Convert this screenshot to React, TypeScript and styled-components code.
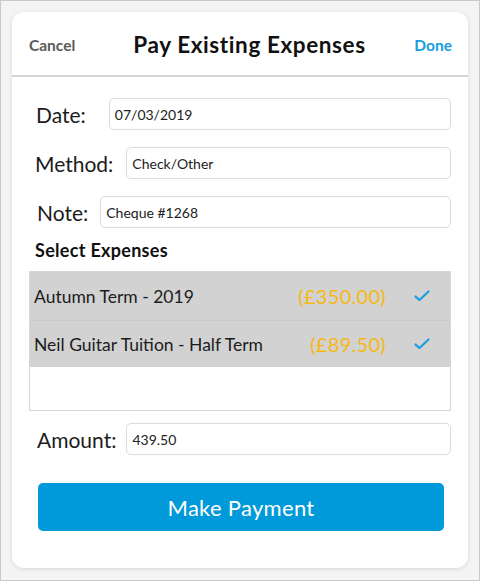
import React from "react";
import styled, { createGlobalStyle } from "styled-components";

const GlobalStyle = createGlobalStyle`
  html, body {
    margin: 0;
    padding: 0;
    background: #f4f4f4;
  }
  * { box-sizing: border-box; }
`;

const Frame = styled.div`
  width: 480px;
  height: 581px;
  border: 1px solid #c9c9c9;
  background: #f4f4f4;
  padding: 11px;
  font-family: Lato, "Noto Sans", sans-serif;
`;

const Card = styled.div`
  width: 456px;
  height: 556px;
  background: #fff;
  border-radius: 12px;
  box-shadow: 0 1px 4px rgba(0, 0, 0, 0.12);
  display: flex;
  flex-direction: column;
`;

const Header = styled.div`
  height: 65px;
  border-bottom: 2px solid #d4d4d4;
  display: flex;
  align-items: center;
  justify-content: space-between;
  padding: 2px 16px 0 17px;
`;

const HeaderButton = styled.span<{ $primary?: boolean }>`
  font-size: 15.5px;
  font-weight: 700;
  color: ${(p) => (p.$primary ? "#1a9ee0" : "#5a5a5a")};
  width: 60px;
  text-align: ${(p) => (p.$primary ? "right" : "left")};
`;

const Title = styled.h1`
  margin: 0 0 0 18px;
  font-size: 22.5px;
  font-weight: 700;
  letter-spacing: 0.6px;
  color: #111;
`;

const Body = styled.div`
  padding: 21px 17px 0 17px;
  display: flex;
  flex-direction: column;
`;

const FieldRow = styled.div<{ $gap: number; $indent: number; $top?: number }>`
  display: flex;
  align-items: center;
  gap: ${(p) => p.$gap}px;
  padding-left: ${(p) => p.$indent}px;
  margin-top: ${(p) => p.$top ?? 0}px;
  margin-bottom: 17px;
`;

const Label = styled.span`
  font-size: 21px;
  color: #1c1c1c;
  white-space: nowrap;
`;

const Input = styled.div`
  flex: 1;
  height: 32px;
  border: 1px solid #dcdcdc;
  border-radius: 5px;
  padding: 0 5px;
  display: flex;
  align-items: center;
  font-size: 14px;
  color: #222;
`;

const SectionTitle = styled.div`
  font-size: 18px;
  font-weight: 700;
  letter-spacing: 0.3px;
  color: #111;
  line-height: 22px;
  padding-left: 6px;
  margin-top: -6px;
  margin-bottom: 10px;
`;

const ExpenseList = styled.div`
  height: 140px;
  border: 1px solid #d6d6d6;
  background: #fff;
  display: flex;
  flex-direction: column;
`;

const ExpenseRow = styled.div`
  height: 48px;
  background: #d2d2d2;
  display: flex;
  align-items: center;
  padding: 0 20px 0 4px;
  & + & {
    border-top: 1px solid #c8c8c8;
    height: 47px;
  }
`;

const ExpenseName = styled.span`
  flex: 1;
  font-size: 17.5px;
  color: #1c1c1c;
`;

const ExpenseAmount = styled.span`
  font-size: 20px;
  letter-spacing: 0.3px;
  color: #f6b913;
  margin-right: 28px;
`;

const Check = () => (
  <svg width="16" height="12" viewBox="0 0 16 12">
    <path d="M1.5 6.5 L5.5 10 L14.5 1.5" fill="none" stroke="#1a9ee0" strokeWidth="2.2" strokeLinecap="round" strokeLinejoin="round" />
  </svg>
);

const PayButton = styled.button`
  margin: 11px 7px 0 9px;
  height: 48px;
  border: none;
  border-radius: 5px;
  background: #0099d9;
  color: #fff;
  font-family: Lato, "Noto Sans", sans-serif;
  font-size: 22px;
  letter-spacing: 0.3px;
`;

const expenses = [
  { name: "Autumn Term - 2019", amount: "(£350.00)" },
  { name: "Neil Guitar Tuition - Half Term", amount: "(£89.50)" },
];

export default function App() {
  return (
    <>
      <GlobalStyle />
      <Frame>
        <Card>
          <Header>
            <HeaderButton>Cancel</HeaderButton>
            <Title>Pay Existing Expenses</Title>
            <HeaderButton $primary>Done</HeaderButton>
          </Header>
          <Body>
            <FieldRow $gap={23} $indent={7}>
              <Label>Date:</Label>
              <Input>07/03/2019</Input>
            </FieldRow>
            <FieldRow $gap={13} $indent={6}>
              <Label>Method:</Label>
              <Input>Check/Other</Input>
            </FieldRow>
            <FieldRow $gap={12} $indent={8}>
              <Label>Note:</Label>
              <Input>Cheque #1268</Input>
            </FieldRow>
            <SectionTitle>Select Expenses</SectionTitle>
            <ExpenseList>
              {expenses.map((e) => (
                <ExpenseRow key={e.name}>
                  <ExpenseName>{e.name}</ExpenseName>
                  <ExpenseAmount>{e.amount}</ExpenseAmount>
                  <Check />
                </ExpenseRow>
              ))}
            </ExpenseList>
            <FieldRow $gap={10} $indent={8} $top={12}>
              <Label>Amount:</Label>
              <Input>439.50</Input>
            </FieldRow>
            <PayButton>Make Payment</PayButton>
          </Body>
        </Card>
      </Frame>
    </>
  );
}
